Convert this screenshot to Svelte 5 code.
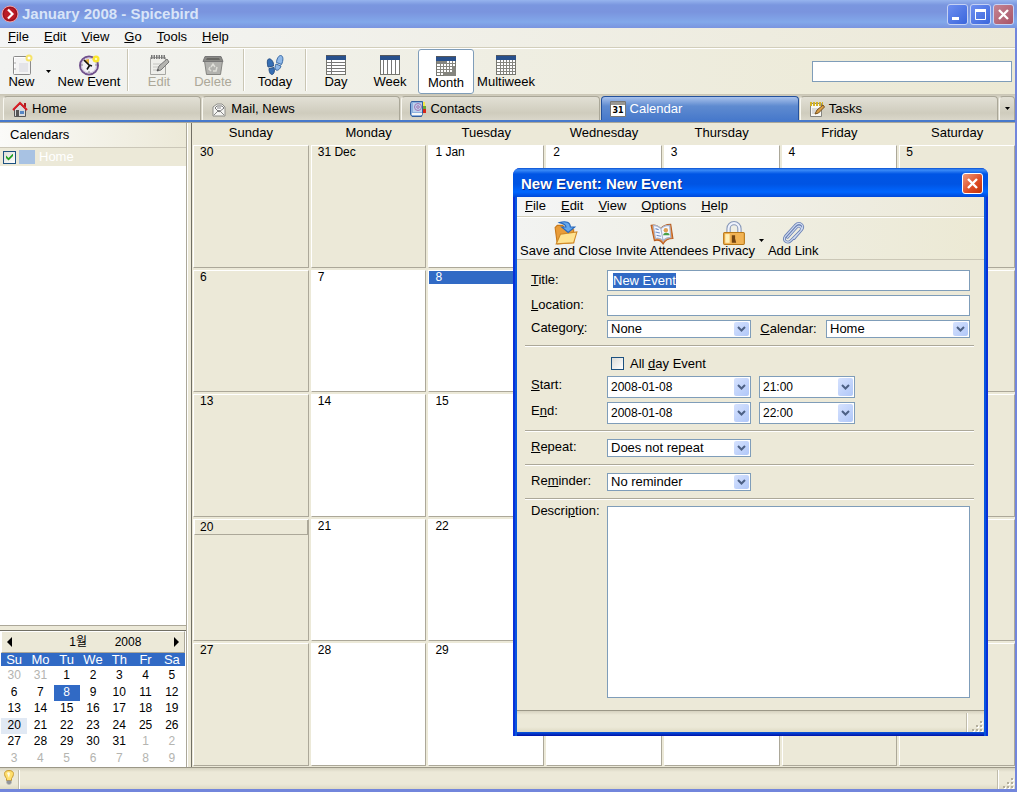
<script lang="ts">
	import { onMount } from 'svelte';

	const menus = ['_File', '_Edit', '_View', '_Go', '_Tools', '_Help'];
	const dialogMenus = ['_File', '_Edit', '_View', '_Options', '_Help'];
	const tabs = ['Home', 'Mail, News', 'Contacts', 'Calendar', 'Tasks'];
	const weekdays = ['Sunday', 'Monday', 'Tuesday', 'Wednesday', 'Thursday', 'Friday', 'Saturday'];
	const views = ['Day', 'Week', 'Month', 'Multiweek'];

	const today = 8;
	const focused = 20;

	// December 30 is the first visible day in both calendars
	function buildWeeks(count: number) {
		return Array.from({ length: count }, (_, w) =>
			Array.from({ length: 7 }, (_, d) => {
				const n = w * 7 + d - 1;
				const inMonth = n >= 1 && n <= 31;
				const day = n < 1 ? n + 31 : n > 31 ? n - 31 : n;
				return { day, inMonth, weekend: d === 0 || d === 6, key: n };
			})
		);
	}

	const monthWeeks = buildWeeks(5);
	const miniWeeks = buildWeeks(6);

	function dayLabel(cell: { day: number; key: number }) {
		if (cell.key === 0) return '31 Dec';
		if (cell.key === 1) return '1 Jan';
		if (cell.key === 32) return '1 Feb';
		return String(cell.day);
	}

	let activeTab = $state('Calendar');
	let activeView = $state('Month');
	let homeShown = $state(true);
	let allDay = $state(false);
	let title = $state('New Event');
	let titleInput: HTMLInputElement;

	onMount(() => {
		titleInput.focus();
		titleInput.select();
	});
</script>

{#snippet access(text: string)}
	{@const parts = text.split('_')}
	<span>{parts[0]}<u>{parts[1][0]}</u>{parts[1].slice(1)}</span>
{/snippet}

{#snippet grip()}
	<span class="panel"></span>
	<svg width="12" height="12" viewBox="0 0 12 12" aria-hidden="true">
		<path fill="#fff" d="M9 2h2v2H9zM5 6h2v2H5zM9 6h2v2H9zM1 10h2v2H1zM5 10h2v2H5zM9 10h2v2H9z" />
		<path fill="#b3ae9c" d="M8 1h2v2H8zM4 5h2v2H4zM8 5h2v2H8zM0 9h2v2H0zM4 9h2v2H4zM8 9h2v2H8z" />
	</svg>
{/snippet}

{#snippet icon(name: string)}
	<svg class="icon" width="22" height="22" viewBox="0 0 22 22" aria-hidden="true">
		{#if name === 'New'}
			<rect x="2.5" y="2.5" width="17" height="18" rx="1" fill="#f4f4f4" stroke="#8b8b8b" />
			<path d="M3.5 20V3.5H17" fill="none" stroke="#fff" />
			<path d="M8 9h9v9H8z" fill="#e4e4e8" />
			<path d="M4 8v2M4 14v2" stroke="#aaa" />
			<circle cx="18" cy="4" r="3.5" fill="#f6e36a" />
			<circle cx="18" cy="4" r="1.5" fill="#fff" />
		{:else if name === 'New Event'}
			<circle cx="11" cy="11.5" r="9" fill="#f3f1f5" stroke="#70508c" stroke-width="2" />
			<circle cx="11" cy="11.5" r="7.5" fill="none" stroke="#c9bdd6" />
			<path d="M11 11.5V5a7 7 0 0 0-5 2z" fill="#e0ad3e" />
			<path d="M6 6l5.500 5.500L9 15.500M11 11l3 1" fill="none" stroke="#111" stroke-width="1.6" />
			<path d="M3 11h2M17 11h2M11 17v2" stroke="#888" />
			<circle cx="18" cy="5" r="3.5" fill="#fbe62e" />
			<circle cx="18" cy="5" r="1.2" fill="#fff9b8" />
		{:else if name === 'Edit'}
			<path d="M2.5 3.5h15v17h-15z" fill="#eeeeea" stroke="#a8a8a4" />
			<path d="M3 3h15" stroke="#777" stroke-width="4" stroke-dasharray="1.500 1" />
			<path d="M5 10h8M5 13h6M5 16h5" stroke="#c4c4c0" />
			<path d="M9 17l2-5 8-7 2 3-8 8z" fill="#b4b4b0" stroke="#777" />
			<path d="M9 17l2-1-1-1z" fill="#333" />
		{:else if name === 'Delete'}
			<path d="M2.5 7h18l-2 13.500h-14z" fill="#b2b2ae" stroke="#858581" />
			<path d="M3 2.5h16l2 5H1z" fill="#8a8a86" stroke="#777" />
			<path d="M5 4h12l1 2H4z" fill="#686864" />
			<path d="M9 13l2-3 2 3M15 13l-1 4h-3M9 17l-2-2 1-2" fill="none" stroke="#deded8" stroke-width="1.5" />
		{:else if name === 'Today'}
			<g fill="#366fb4" stroke="#2a5288">
				<path d="M4.500 5C7 4 10 8 9.500 12L4 13C3 9 3 6 4.500 5z" />
				<path d="M5 14.500l5-1c1 3 0 7-2 7s-3-3-3-6z" />
			</g>
			<g fill="#8fb8e8" stroke="#386aa6">
				<path d="M16.500 1.500c3 0 3 5 1 9l-5-2c0-3 2-7 4-7z" />
				<path d="M12 10l5 2c-1 3-3 5-5 4-1.500-1-1-4 0-6z" />
			</g>
		{:else if views.includes(name)}
			<rect x="1.5" y="1.5" width="19" height="19" fill="#fff" stroke="#77776f" />
			<rect x="1" y="1" width="20" height="5" fill="#28508c" />
			<path d="M1 1.5h20" stroke="#57595c" />
			{#if name === 'Day'}
				<path d="M2 8.500h18M2 11.500h18M2 14.500h18M2 17.500h18M6.500 6v14" stroke="#777" />
			{:else if name === 'Week'}
				<path d="M4.500 6v14M8.500 6v14M12.500 6v14M16.500 6v14" stroke="#777" />
			{:else}
				<path d="M2 8.500h18M2 11.500h18M2 14.500h18M2 17.500h18M5.500 6v14M8.500 6v14M11.500 6v14M14.500 6v14M17.500 6v14" stroke="#85857f" />
				{#if name === 'Month'}
					<path d="M2 6h9v3H2zM9 17h12v4H9zM18 12h3v9h-3z" fill="#85857f" />
				{/if}
			{/if}
		{:else if name === 'Save'}
			<path d="M1 6l2-2h5l2 3 8 1v12L3 21z" fill="#e99c38" stroke="#c87818" />
			<path d="M2 21L6 12l15-2-3 10z" fill="#ffe390" stroke="#d08a28" />
			<path d="M5 1.500c6-2 10 0 10 4h4l-6 5-6-5h4c0-2-2-3-6-4z" fill="#65a8ec" stroke="#2868bc" />
		{:else if name === 'Invite'}
			<path d="M1 4c3-1 6 0 9 3 2-3 6-4 9-4l2 13c-4 0-7 1-9 5-2-3-5-4-8-3z" fill="#e98e42" stroke="#b85c20" />
			<path d="M3 4c3 0 5 1 7 3l2 11c-2-2-4-3-7-2zM10 7c2-2 5-3 8-3l1 11c-3 0-5 1-7 3z" fill="#f4f7ff" stroke="#a8b4cc" />
			<circle cx="14.5" cy="8.5" r="2" fill="#e0a050" />
			<path d="M12 13c0-3 6-3 6 0z" fill="#48a048" />
			<path d="M5 7l3 1M5 10l4 1M6 13l4 1" stroke="#7090c8" />
		{:else if name === 'Privacy'}
			<path d="M6 11V7a5 5 0 0 1 10 0v4" fill="none" stroke="#8898b8" stroke-width="4" />
			<path d="M6 11V7a5 5 0 0 1 10 0v4" fill="none" stroke="#eef2fc" stroke-width="2" />
			<rect x="1.5" y="10.5" width="19" height="11" rx="1" fill="#f2b353" stroke="#b87818" />
			<path d="M3 12h4v8H3z" fill="#fff0b8" />
			<path d="M9 13h3v3l1 4H9z" fill="#734410" />
		{:else if name === 'Link'}
			<g fill="none" stroke-linecap="round">
				<path d="M6 15l8-9c3-3 6 0 4 3l-9 9c-3 3-8 0-5-4l9-10c4-4 9 0 6 4l-7 8" stroke="#6b82b5" stroke-width="2.6" />
				<path d="M6 15l8-9c3-3 6 0 4 3l-9 9c-3 3-8 0-5-4l9-10c4-4 9 0 6 4l-7 8" stroke="#d2dcf1" />
			</g>
		{/if}
	</svg>
{/snippet}

{#snippet tabIcon(name: string)}
	<svg class="tab-icon" width="16" height="16" viewBox="0 0 16 16" aria-hidden="true">
		{#if name === 'Home'}
			<path d="M2.500 8L8 3l5.500 5v7.500h-11z" fill="#d8dadc" stroke="#555" />
			<path d="M4 9h3v7H4z" fill="#555" />
			<path d="M8 10h4v3H8z" fill="#5687c5" />
			<path d="M12 2h2v4h-2z" fill="#a82020" />
			<path d="M1 9l7-7 7 7" fill="none" stroke="#d81c24" stroke-width="2" />
		{:else if name === 'Mail, News'}
			<path d="M2 6l4-3h5l3 3v9H2z" fill="#f5f5f2" stroke="#8d8d89" />
			<path d="M4 7l2-2h5l2 2-5 4z" fill="#fff" stroke="#777" />
			<path d="M3 14l5-5 5 5" fill="none" stroke="#888" />
			<path d="M6 7h4" stroke="#888" />
		{:else if name === 'Contacts'}
			<path d="M.500 2.500l1-2h11v12l-1 3H2l-1.500-2z" fill="#8fb2df" stroke="#345f9f" />
			<path d="M13 1h2v4h-2z" fill="#f4e84a" />
			<path d="M13 5h3v5h-3z" fill="#70a830" />
			<path d="M13 8h3v4h-3z" fill="#d82818" />
			<path d="M3 2h9v9H3z" fill="#bdd2ee" />
			<path d="M2 12h10v2H2z" fill="#f8f8f8" />
			<circle cx="8" cy="6" r="3.5" fill="none" stroke="#a374b2" />
			<circle cx="8" cy="6" r="1.3" fill="none" stroke="#a374b2" />
		{:else if name === 'Calendar'}
			<path d="M.5.5h15v15H.5z" fill="#fff" stroke="#777" />
			<path d="M1 1h14v3H1z" fill="#999792" />
			<text x="8" y="11.5" text-anchor="middle">31</text>
		{:else}
			<path d="M1.5 2.5h11v13h-11z" fill="#f8f8f5" stroke="#858580" />
			<path d="M1 3h13" stroke="#d4b326" stroke-width="4" stroke-dasharray="2 1" />
			<path d="M3 8h7M3 10h5M3 12h4" stroke="#bbb" />
			<path d="M6 13l2-4 6-5 1.500 2-6 6z" fill="#d99d43" stroke="#77511e" />
		{/if}
	</svg>
{/snippet}

{#snippet combo(id: string, value: string, size: string)}
	<span class="combo {size}">
		<select {id}><option>{value}</option></select>
		<span class="drop">
			<svg width="9" height="6" viewBox="0 0 9 6"><path d="M1 1l3.500 3.500L8 1" fill="none" stroke="#4d6185" stroke-width="2" /></svg>
		</span>
	</span>
{/snippet}

{#snippet caret()}
	<svg width="5" height="3" viewBox="0 0 5 3" aria-hidden="true"><path d="M0 0h5L2.500 3z" /></svg>
{/snippet}

<div class="window">
	<header class="titlebar">
		<svg width="18" height="18" viewBox="0 0 18 18" aria-hidden="true">
			<circle cx="9" cy="9" r="8" fill="#bc1b25" stroke="#e8a4ac" />
			<circle cx="9" cy="9" r="6.5" fill="none" stroke="#8c1420" />
			<path d="M7 4.500L11.500 9 7 13.500" fill="none" stroke="#fff" stroke-width="2.2" />
		</svg>
		<h1>January 2008 - Spicebird</h1>
		<div class="window-buttons">
			<button aria-label="Minimize"><svg width="17" height="17" viewBox="0 0 17 17"><path d="M3 11h7v3H3z" fill="#fff" /></svg></button>
			<button aria-label="Maximize"><svg width="17" height="17" viewBox="0 0 17 17"><path d="M3.500 4.500h10v9h-10z" fill="none" stroke="#fff" /><path d="M3 3h11v3H3z" fill="#fff" /></svg></button>
			<button class="close" aria-label="Close"><svg width="17" height="17" viewBox="0 0 17 17"><path d="M4 4l9 9M13 4l-9 9" stroke="#fff" stroke-width="2.3" /></svg></button>
		</div>
	</header>

	<div class="frame">
		<nav class="menubar">
			{#each menus as item}
				<button>{@render access(item)}</button>
			{/each}
		</nav>

		<div class="toolbar">
			<button class="tool new">{@render icon('New')}New</button>
			<button class="more" aria-label="More new items">{@render caret()}</button>
			<button class="tool new-event">{@render icon('New Event')}New Event</button>
			<span class="rule"></span>
			<button class="tool" disabled>{@render icon('Edit')}Edit</button>
			<button class="tool" disabled>{@render icon('Delete')}Delete</button>
			<span class="rule"></span>
			<button class="tool">{@render icon('Today')}Today</button>
			<span class="rule"></span>
			{#each views as view}
				<button class="tool {view.toLowerCase()}" class:active={activeView === view} onclick={() => (activeView = view)}>
					{@render icon(view)}{view}
				</button>
			{/each}
			<input class="search" type="text" aria-label="Search" />
		</div>

		<div class="tabs" role="tablist">
			{#each tabs as tab}
				<button class="tab" class:selected={activeTab === tab} role="tab" aria-selected={activeTab === tab} onclick={() => (activeTab = tab)}>
					{@render tabIcon(tab)}{tab}
				</button>
			{/each}
			<button class="tab all-tabs" aria-label="All tabs">{@render caret()}</button>
		</div>

		<main>
			<aside>
				<h2>Calendars</h2>
				<div class="tree">
					<label class="calendar-row">
						<input type="checkbox" bind:checked={homeShown} />
						<span class="swatch"></span>
						Home
					</label>
				</div>
				<div class="splitter"></div>
				<div class="mini">
					<div class="mini-head">
						<button aria-label="Previous month"><svg width="5" height="10" viewBox="0 0 5 10"><path d="M5 0v10L0 5z" /></svg></button>
						<span class="mini-month">1월</span>
						<span class="mini-year">2008</span>
						<button aria-label="Next month"><svg width="5" height="10" viewBox="0 0 5 10"><path d="M0 0v10l5-5z" /></svg></button>
					</div>
					<table class="mini-days">
						<thead>
							<tr>{#each weekdays as day}<th>{day.slice(0, 2)}</th>{/each}</tr>
						</thead>
						<tbody>
							{#each miniWeeks as week}
								<tr>
									{#each week as cell}
										<td class:other={!cell.inMonth} class:today={cell.key === today} class:focused={cell.key === focused}>{cell.day}</td>
									{/each}
								</tr>
							{/each}
						</tbody>
					</table>
				</div>
			</aside>

			<div class="divider"></div>

			<table class="month-grid">
				<thead>
					<tr>{#each weekdays as day}<th>{day}</th>{/each}</tr>
				</thead>
				<tbody>
					{#each monthWeeks as week}
						<tr>
							{#each week as cell}
								<td class:off={!cell.inMonth || cell.weekend}>
									<div class="date" class:today={cell.key === today} class:focused={cell.key === focused}>{dayLabel(cell)}</div>
								</td>
							{/each}
						</tr>
					{/each}
				</tbody>
			</table>
		</main>

		<footer class="status">
			<span class="status-icon">
				<svg width="10" height="15" viewBox="0 0 10 15" aria-hidden="true">
					<path d="M5 .500c6 0 5 5 2.500 8v2h-5v-2C0 5.500-1 .500 5 .500z" fill="#ffdf6d" stroke="#c89b32" />
					<path d="M3 3c1-1 2-1 3 0L5 8z" fill="#fffbe0" />
					<path d="M2.500 10.500h5v3h-1v1h-3v-1h-1z" fill="#92959a" />
				</svg>
			</span>
			{@render grip()}
		</footer>
	</div>

	<section class="dialog" role="dialog" aria-labelledby="dialog-title">
		<header class="dialog-title">
			<h2 id="dialog-title">New Event: New Event</h2>
			<button aria-label="Close dialog"><svg width="19" height="19" viewBox="0 0 19 19"><path d="M5 5l9 9M14 5l-9 9" stroke="#fff" stroke-width="2.4" /></svg></button>
		</header>
		<div class="dialog-frame">
			<nav class="menubar">
				{#each dialogMenus as item}
					<button>{@render access(item)}</button>
				{/each}
			</nav>
			<div class="dialog-tools">
				<button>{@render icon('Save')}Save and Close</button>
				<button>{@render icon('Invite')}Invite Attendees</button>
				<button>{@render icon('Privacy')}Privacy</button>
				<button class="privacy-more" aria-label="Privacy options">{@render caret()}</button>
				<button>{@render icon('Link')}Add Link</button>
			</div>

			<form>
				<div class="group first">
					<label class="beside-input" for="title">{@render access('_Title:')}</label>
					<input id="title" type="text" bind:value={title} bind:this={titleInput} />
					<label class="beside-input" for="location">{@render access('_Location:')}</label>
					<input id="location" type="text" />
					<label for="category">{@render access('Categor_y:')}</label>
					<div class="line">
						{@render combo('category', 'None', 'wide')}
						<label class="calendar-label" for="calendar">{@render access('_Calendar:')}</label>
						{@render combo('calendar', 'Home', 'wide')}
					</div>
				</div>
				<div class="group times">
					<label class="all-day">
						<input type="checkbox" bind:checked={allDay} />
						{@render access('All _day Event')}
					</label>
					<label for="start">{@render access('_Start:')}</label>
					<div class="line">
						{@render combo('start', '2008-01-08', 'wide tall')}
						{@render combo('start-time', '21:00', 'narrow tall')}
					</div>
					<label for="end">{@render access('E_nd:')}</label>
					<div class="line">
						{@render combo('end', '2008-01-08', 'wide tall')}
						{@render combo('end-time', '22:00', 'narrow tall')}
					</div>
				</div>
				<div class="group">
					<label for="repeat">{@render access('_Repeat:')}</label>
					{@render combo('repeat', 'Does not repeat', 'wide')}
				</div>
				<div class="group">
					<label for="reminder">{@render access('Re_minder:')}</label>
					{@render combo('reminder', 'No reminder', 'wide')}
				</div>
				<div class="group description">
					<label for="description">{@render access('Descri_ption:')}</label>
					<textarea id="description"></textarea>
				</div>
			</form>
			<footer class="status">{@render grip()}</footer>
		</div>
	</section>
</div>

<style>
	:global(body) {
		margin: 0;
		background: #ece9d8;
	}

	.window {
		position: relative;
		display: flex;
		flex-direction: column;
		min-height: 100vh;
		font-family: 'Liberation Sans', 'Noto Sans CJK KR', sans-serif;
		font-size: 13px;
		line-height: 16px;
		color: #000;
	}

	.window * {
		box-sizing: border-box;
	}

	button,
	input,
	select,
	textarea {
		margin: 0;
		font: inherit;
		color: inherit;
		border-radius: 0;
		outline: none;
	}

	button {
		padding: 0;
		border: 0;
		background: none;
		white-space: nowrap;
	}

	h1,
	h2 {
		margin: 0;
		font-size: 15px;
		white-space: nowrap;
	}

	svg {
		display: block;
		flex: none;
	}

	/* Main window chrome */
	.titlebar {
		display: flex;
		align-items: center;
		gap: 3px;
		height: 28px;
		padding: 0 3px 0 1px;
		background: linear-gradient(#96b4ee 0, #7a96df 5px, #7a94de 12px, #82a8ea 22px, #7a94df 28px);
		color: #d8e4f8;
	}

	.window-buttons {
		display: flex;
		gap: 2px;
		margin-left: auto;
	}

	.window-buttons button {
		padding: 1px;
		border: 1px solid #c6d2f4;
		border-radius: 3px;
		background: linear-gradient(135deg, #6e8ff0, #3a66dc);
	}

	.window-buttons .close {
		background: linear-gradient(135deg, #c58492, #a85468);
	}

	.frame {
		display: flex;
		flex: 1;
		flex-direction: column;
		border-right: 2px solid #7286dc;
		border-bottom: 3px solid #7286dc;
		background: #ece9d8;
	}

	.menubar {
		display: flex;
		gap: 15px;
		height: 20px;
		padding: 0 8px 2px;
		border-bottom: 1px solid #d2cebb;
		background: linear-gradient(90deg, #f4f5f5, #ece9d8);
	}

	.toolbar {
		display: flex;
		align-items: flex-start;
		height: 46px;
		border-top: 1px solid #fff;
		background: linear-gradient(90deg, #f2f3f1, #ece9d4);
	}

	.tool {
		display: flex;
		flex-direction: column;
		align-items: center;
		width: 54px;
		height: 45px;
		padding-top: 4px;
		border: 1px solid transparent;
		border-radius: 3px;
	}

	.tool.new {
		width: 43px;
	}

	.tool.new-event {
		width: 70px;
	}

	.tool.day {
		width: 52px;
	}

	.tool.week,
	.tool.month {
		width: 56px;
	}

	.tool.multiweek {
		width: 64px;
	}

	.tool:disabled {
		color: #aca899;
	}

	.tool .icon {
		margin-bottom: -2px;
	}

	.tool.active {
		padding-top: 5px;
		border-color: #7f9db9;
		background: #fff;
	}

	.more {
		width: 11px;
		padding: 21px 3px;
	}

	.rule {
		width: 2px;
		height: 42px;
		margin: 0 3px;
		border-left: 1px solid #cac6b4;
		border-right: 1px solid #fff;
	}

	.search {
		width: 200px;
		height: 21px;
		margin: 12px 3px 0 auto;
		border: 1px solid #7f9db9;
		background: #fff;
	}

	/* Tab strip */
	.tabs {
		display: flex;
		gap: 1px;
		height: 29px;
		padding: 2px 0 0 3px;
		border-bottom: 1px solid #aca899;
		background: linear-gradient(#c9c5b4, #d8d5c8 4px);
		box-shadow: inset 0 -2px #4779cb;
	}

	.tab {
		display: flex;
		flex: 1;
		align-items: center;
		gap: 4px;
		height: 24px;
		padding: 0 8px;
		border: 1px solid #aaa798;
		border-bottom: 0;
		border-left-color: #f8f7f0;
		border-radius: 4px 4px 0 0;
		background: linear-gradient(#e2e0d5, #cfccbd 16px, #dad7ca);
	}

	.tab.selected {
		padding-top: 1px;
		border-color: #24519b;
		background: linear-gradient(#a9c2ec, #5f8bd0 9px, #4779cb);
		color: #fff;
	}

	.all-tabs {
		flex: none;
		width: 16px;
		padding: 0 5px;
	}

	.tab-icon text {
		font: bold 8px 'DejaVu Sans', sans-serif;
	}

	main {
		display: flex;
		flex: 1;
	}

	/* Sidebar */
	aside {
		display: flex;
		flex-direction: column;
		width: 187px;
		border-right: 1px solid #aca899;
		background: #fff;
	}

	aside h2 {
		height: 25px;
		padding: 4px 10px;
		border-bottom: 1px solid #cbc7b8;
		background: linear-gradient(90deg, #fbfbf9, #ece9d8);
		font-size: 13px;
		font-weight: normal;
	}

	.tree {
		flex: 1;
		border-bottom: 1px solid #aca899;
	}

	.calendar-row {
		display: flex;
		align-items: center;
		height: 18px;
		padding-left: 3px;
		background: #ece9d8;
		color: #fff;
	}

	.swatch {
		width: 16px;
		height: 14px;
		margin: 0 4px 0 3px;
		background: #a8c2e3;
	}

	input[type='checkbox'] {
		appearance: none;
		display: grid;
		place-items: center;
		width: 13px;
		height: 13px;
		border: 1px solid #1c5180;
		background: linear-gradient(135deg, #dcdcd7, #fff);
	}

	input[type='checkbox']:checked::after {
		content: '';
		width: 7px;
		height: 7px;
		background: #21a121;
		clip-path: polygon(0 28%, 0 64%, 36% 100%, 100% 36%, 100% 0, 36% 64%);
	}

	.splitter {
		height: 5px;
		border-bottom: 1px solid #716f64;
		background: #ece9d8;
	}

	.mini {
		padding: 0 1px;
	}

	.mini-head {
		display: grid;
		grid-template-columns: 12px 1fr 1fr 12px;
		align-items: center;
		height: 22px;
		padding: 0 5px;
		border: 1px solid #fff;
		border-right-color: #aca899;
		border-bottom-color: #aca899;
		background: #ece9d8;
		font-size: 12px;
	}

	.mini-month {
		padding-right: 6px;
		text-align: right;
	}

	.mini-year {
		justify-self: center;
		padding-right: 4px;
	}

	.mini-head button:last-child {
		justify-self: end;
	}

	table,
	.mini-days tr {
		display: grid;
	}

	.mini-days {
		grid-template-rows: 15px 99px;
		font-size: 12px;
		line-height: 15px;
	}

	.mini-days tbody {
		display: grid;
		grid-auto-rows: 1fr;
	}

	.mini-days tr {
		grid-template-columns: repeat(7, 1fr);
	}

	.mini-days th {
		padding: 0;
		background: #316ac5;
		color: #fff;
		font-size: 13px;
		font-weight: normal;
		line-height: 13px;
	}

	.mini-days td {
		padding: 0;
		text-align: center;
	}

	.mini-days .other {
		color: #b4b4b0;
	}

	.mini-days .focused {
		background: #e1e9f4;
	}

	.mini-days .today,
	.date.today {
		background: #316ac5;
		color: #fff;
	}

	.divider {
		width: 5px;
		border-right: 1px solid #716f64;
		border-left: 1px solid #fff;
	}

	/* Month view */
	.month-grid {
		flex: 1;
		grid-template-rows: 20px repeat(5, 1fr);
		grid-template-columns: repeat(7, 1fr);
		gap: 2px;
		padding: 0 0 1px 1px;
	}

	.month-grid thead,
	.month-grid tbody,
	.month-grid tr {
		display: contents;
	}

	.month-grid th {
		padding: 2px 0;
		font-weight: normal;
	}

	.month-grid td {
		padding: 0;
		border: 1px solid #fff;
		border-right-color: #aca899;
		border-bottom-color: #aca899;
		background: #fff;
		font-size: 12px;
	}

	.month-grid td.off {
		background: #ece9d8;
	}

	.date {
		height: 13px;
		padding-left: 6px;
		line-height: 12px;
	}

	.date.focused {
		height: 15px;
		padding-left: 5px;
		border-right: 1px solid #aca899;
		border-bottom: 1px solid #aca899;
		border-left: 1px solid #fff;
		line-height: 14px;
	}

	/* Status bars */
	.status {
		display: flex;
		align-items: flex-end;
		height: 22px;
		border-top: 1px solid #9b9787;
		background: linear-gradient(#d6d2c0, #ece9d8 4px, #ece9d8 16px, #dedac4);
	}

	.status-icon {
		height: 19px;
		padding: 0 4px;
		border-right: 1px solid #c0bcab;
		box-shadow: 1px 0 #fff;
	}

	.panel {
		flex: 1;
		height: 19px;
		margin-right: 5px;
		border-right: 1px solid #c0bcab;
		box-shadow: 1px 0 #fff;
	}

	.status-icon + .panel {
		margin-left: 1px;
	}

	/* Event dialog, floating over the main window */
	.dialog {
		position: absolute;
		top: 168px;
		left: 513px;
		width: 475px;
		border-radius: 7px 7px 0 0;
		background: #0831d9;
	}

	.dialog-title {
		display: flex;
		align-items: center;
		justify-content: space-between;
		height: 29px;
		padding: 2px 5px 0 8px;
		border-radius: 7px 7px 0 0;
		background: linear-gradient(#0a50d0 0, #3c8cf8 2px, #0055e5 6px, #0054e3 16px, #0066ff 24px, #0048d8 29px);
		color: #fff;
		text-shadow: 1px 1px #0a2a88;
	}

	.dialog-title button {
		border: 1px solid #fff;
		border-radius: 3px;
		background: linear-gradient(135deg, #f09a7c, #dc4a22 60%, #c03408);
	}

	.dialog-frame {
		margin: 0 4px;
		padding-bottom: 4px;
		background: linear-gradient(#0855dd, #0010a8) bottom / 100% 4px no-repeat;
		box-shadow:
			-2px 0 #0855dd,
			2px 0 #0855dd;
	}

	.dialog-tools {
		display: flex;
		gap: 4px;
		height: 43px;
		padding: 3px 3px 0;
		border-top: 1px solid #fff;
		border-bottom: 1px solid #cbc7b6;
		background: linear-gradient(90deg, #f2f3f1, #ece9d4);
	}

	.dialog-tools button {
		display: flex;
		flex-direction: column;
		align-items: center;
	}

	.dialog-tools .privacy-more {
		padding-top: 18px;
	}

	.dialog-tools .icon {
		width: 24px;
		height: 24px;
		margin-bottom: -2px;
	}

	form {
		padding: 0 10px 4px 8px;
		background: #ece9d8;
	}

	.group {
		display: grid;
		grid-template-columns: 76px 1fr;
		row-gap: 4px;
		padding: 7px 4px 7px 6px;
		border-top: 1px solid #fff;
		border-bottom: 1px solid #aca899;
	}

	.group.first {
		padding-top: 10px;
		border-top: 0;
	}

	.group.times {
		padding-bottom: 6px;
	}

	.group.description {
		padding-top: 3px;
		padding-bottom: 8px;
		border-bottom: 0;
	}

	.group > label {
		white-space: nowrap;
	}

	.group > .beside-input {
		padding-top: 2px;
	}

	.group.times > label {
		padding-top: 1px;
	}

	form input[type='text'],
	textarea {
		width: 100%;
		height: 21px;
		padding: 0 5px;
		border: 1px solid #7f9db9;
		background: #fff;
	}

	input::selection {
		background: #316ac5;
		color: #fff;
	}

	textarea {
		display: block;
		height: 192px;
		margin-top: 3px;
		resize: none;
	}

	.line {
		display: flex;
		align-items: center;
		gap: 8px;
	}

	.calendar-label {
		margin: 0 auto;
	}

	.combo {
		position: relative;
		height: 18px;
	}

	.combo.wide {
		width: 144px;
	}

	.combo.narrow {
		width: 96px;
	}

	.combo.tall {
		height: 22px;
		font-size: 12px;
	}

	.combo select {
		appearance: none;
		display: block;
		width: 100%;
		height: 100%;
		padding: 0 20px 0 3px;
		border: 1px solid #7f9db9;
		background: #fff;
	}

	.drop {
		position: absolute;
		top: 2px;
		right: 2px;
		bottom: 2px;
		display: grid;
		place-items: center;
		width: 15px;
		border-radius: 2px;
		background: linear-gradient(135deg, #d6e2fe, #b0c7f8);
		pointer-events: none;
	}

	.group > .all-day {
		display: flex;
		grid-column: 2;
		align-items: center;
		gap: 6px;
		height: 18px;
		padding: 0 0 0 4px;
	}
</style>
